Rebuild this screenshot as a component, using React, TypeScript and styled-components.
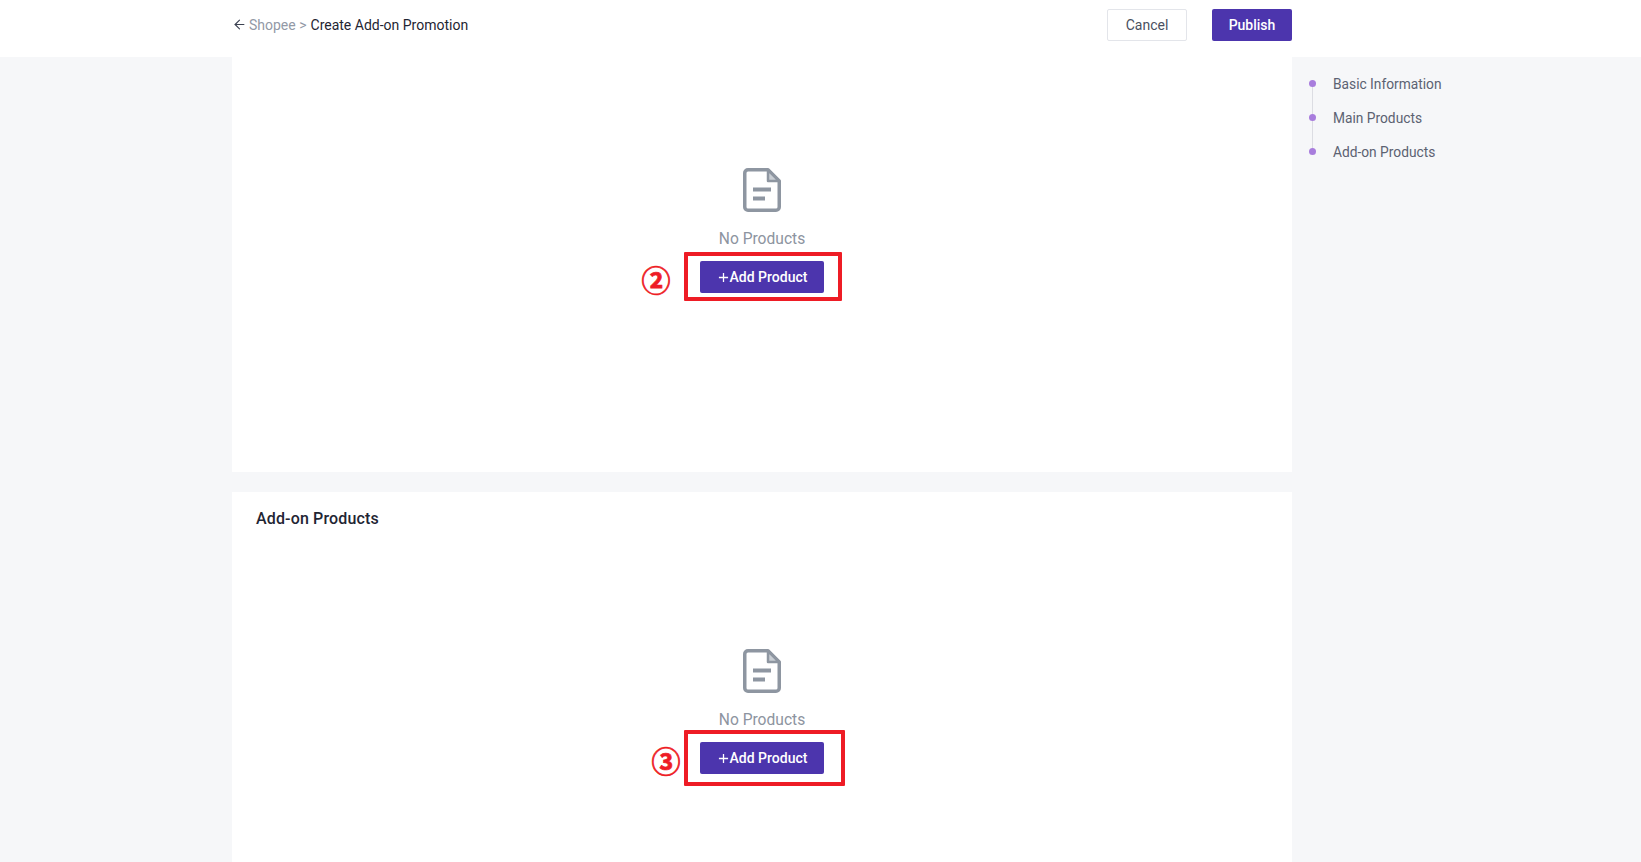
import { createGlobalStyle, styled } from "styled-components";
import { ArrowLeft } from "lucide-react";

const GlobalStyle = createGlobalStyle`
    html, body {
        margin: 0;
        padding: 0;
        height: 100%;
        overflow: hidden;
        background-color: #f6f7f9;
        font-family: Roboto, "Liberation Sans", sans-serif;
    }
`;

const Header = styled.header`
    height: 57px;
    box-sizing: border-box;
    background-color: #ffffff;
    display: flex;
    align-items: center;
    padding: 0 349px 7px 232px;
    div.crumbs {
        flex: 1;
        display: flex;
        align-items: center;
        font-size: 14px;
        line-height: 16px;
        margin-top: -1px;
        color: #1f2533;
        svg {
            width: 15px;
            height: 15px;
            color: #3c4252;
            margin-right: 2px;
        }
        span.parent {
            color: #9299a6;
            margin-right: 4px;
        }
    }
    div.actions {
        display: flex;
        gap: 25px;
    }
`;

const Button = styled.button<{ $primary?: boolean }>`
    width: 80px;
    height: 32px;
    box-sizing: border-box;
    border-radius: 2px;
    font-family: inherit;
    font-size: 14px;
    padding: 0;
    cursor: pointer;
    background-color: ${({ $primary }) => ($primary ? "#4c35ad" : "#ffffff")};
    color: ${({ $primary }) => ($primary ? "#ffffff" : "#4a5060")};
    border: ${({ $primary }) => ($primary ? "none" : "1px solid #e3e5ea")};
    font-weight: ${({ $primary }) => ($primary ? 500 : 400)};
`;

const Body = styled.div`
    display: flex;
    padding-left: 232px;
`;

const Main = styled.main`
    width: 1060px;
    display: flex;
    flex-direction: column;
    gap: 20px;
`;

const Panel = styled.section<{ $height: number }>`
    background-color: #ffffff;
    height: ${({ $height }) => $height}px;
    box-sizing: border-box;
    display: flex;
    flex-direction: column;
    h2 {
        margin: 17px 0 0 24px;
        font-size: 16px;
        line-height: 19px;
        font-weight: 500;
        letter-spacing: 0.15px;
        color: #1f2533;
    }
`;

const Empty = styled.div<{ $top: number }>`
    display: flex;
    flex-direction: column;
    align-items: center;
    padding-top: ${({ $top }) => $top}px;
    svg.doc {
        display: block;
        width: 38px;
        height: 44px;
    }
    span.note {
        margin-top: 18px;
        font-size: 15.6px;
        line-height: 19px;
        color: #8d94a0;
    }
`;

const AddWrap = styled.div`
    position: relative;
    margin-top: 12px;
    width: 124px;
    height: 32px;
`;

const AddButton = styled.button`
    width: 124px;
    height: 32px;
    border: none;
    border-radius: 2px;
    background-color: #4c35ad;
    color: #ffffff;
    font-family: inherit;
    font-size: 14px;
    font-weight: 500;
    padding: 0 0 0 1px;
    display: flex;
    align-items: center;
    justify-content: center;
    gap: 1px;
    cursor: pointer;
    svg {
        width: 11px;
        height: 11px;
    }
`;

const Marker = styled.div<{ $tall: boolean }>`
    position: absolute;
    left: -16px;
    top: ${({ $tall }) => ($tall ? "-12px" : "-9px")};
    width: ${({ $tall }) => ($tall ? "161px" : "158px")};
    height: ${({ $tall }) => ($tall ? "56px" : "49px")};
    box-sizing: border-box;
    border: 4px solid #ee1c25;
    border-radius: 1px;
`;

const Step = styled.span<{ $left: number }>`
    position: absolute;
    left: ${({ $left }) => $left}px;
    top: 0;
    width: 28px;
    height: 36px;
    display: flex;
    align-items: center;
    justify-content: center;
    font-family: "Noto Sans CJK SC", sans-serif;
    font-size: 29px;
    line-height: 36px;
    font-weight: 700;
    color: #ee1c25;
    -webkit-text-stroke: 0.7px #ee1c25;
`;

const Outline = styled.nav`
    padding: 19px 0 0 17px;
    display: flex;
    flex-direction: column;
    gap: 18px;
    position: relative;
    &::before {
        content: "";
        position: absolute;
        left: 20px;
        top: 27px;
        width: 1px;
        height: 68px;
        background-color: #dcdde3;
    }
`;

const OutlineItem = styled.a`
    display: flex;
    align-items: center;
    gap: 17px;
    font-size: 13.75px;
    line-height: 16px;
    color: #5c6272;
    position: relative;
    &::before {
        content: "";
        width: 7px;
        height: 7px;
        border-radius: 50%;
        background-color: #a87ddd;
        margin-top: -2px;
    }
`;

const DocIcon = () => (
    <svg className="doc" viewBox="0 0 38 44" fill="none">
        <path
            d="M5 1.75H25L36.25 13V39A3.25 3.25 0 0 1 33 42.25H5A3.25 3.25 0 0 1 1.75 39V5A3.25 3.25 0 0 1 5 1.75Z"
            stroke="#8e96a1"
            strokeWidth="3.5"
            strokeLinejoin="round"
        />
        <path d="M25 2V13H36Z" fill="#c9ced4" stroke="#8e96a1" strokeWidth="2.5" strokeLinejoin="round" />
        <rect x="10" y="19.5" width="18" height="4" fill="#8e96a1" />
        <rect x="10" y="28.5" width="12" height="4" fill="#8e96a1" />
    </svg>
);

const PlusIcon = () => (
    <svg viewBox="0 0 12 12" fill="none" stroke="#ffffff" strokeWidth="1.4">
        <path d="M6 1V11M1 6H11" />
    </svg>
);

type EmptyStateProps = {
    top: number;
    step: string;
    stepLeft: number;
    tall?: boolean;
};

const EmptyState = ({ top, step, stepLeft, tall = false }: EmptyStateProps) => {
    return (<Empty $top={top}>
        <DocIcon />
        <span className="note">No Products</span>
        <AddWrap>
            <AddButton><PlusIcon />Add Product</AddButton>
            <Marker $tall={tall} />
            <Step $left={stepLeft}>{step}</Step>
        </AddWrap>
    </Empty>);
};

export default function App() {
    return (<>
        <GlobalStyle />
        <Header>
            <div className="crumbs">
                <ArrowLeft strokeWidth={1.8} />
                <span className="parent">Shopee &gt;</span>
                <span>Create Add-on Promotion</span>
            </div>
            <div className="actions">
                <Button>Cancel</Button>
                <Button $primary>Publish</Button>
            </div>
        </Header>
        <Body>
            <Main>
                <Panel $height={415}>
                    <EmptyState top={111} step="②" stepLeft={-58} />
                </Panel>
                <Panel $height={400}>
                    <h2>Add-on Products</h2>
                    <EmptyState top={121} step="③" stepLeft={-48} tall />
                </Panel>
            </Main>
            <Outline>
                <OutlineItem>Basic Information</OutlineItem>
                <OutlineItem>Main Products</OutlineItem>
                <OutlineItem>Add-on Products</OutlineItem>
            </Outline>
        </Body>
    </>);
}
